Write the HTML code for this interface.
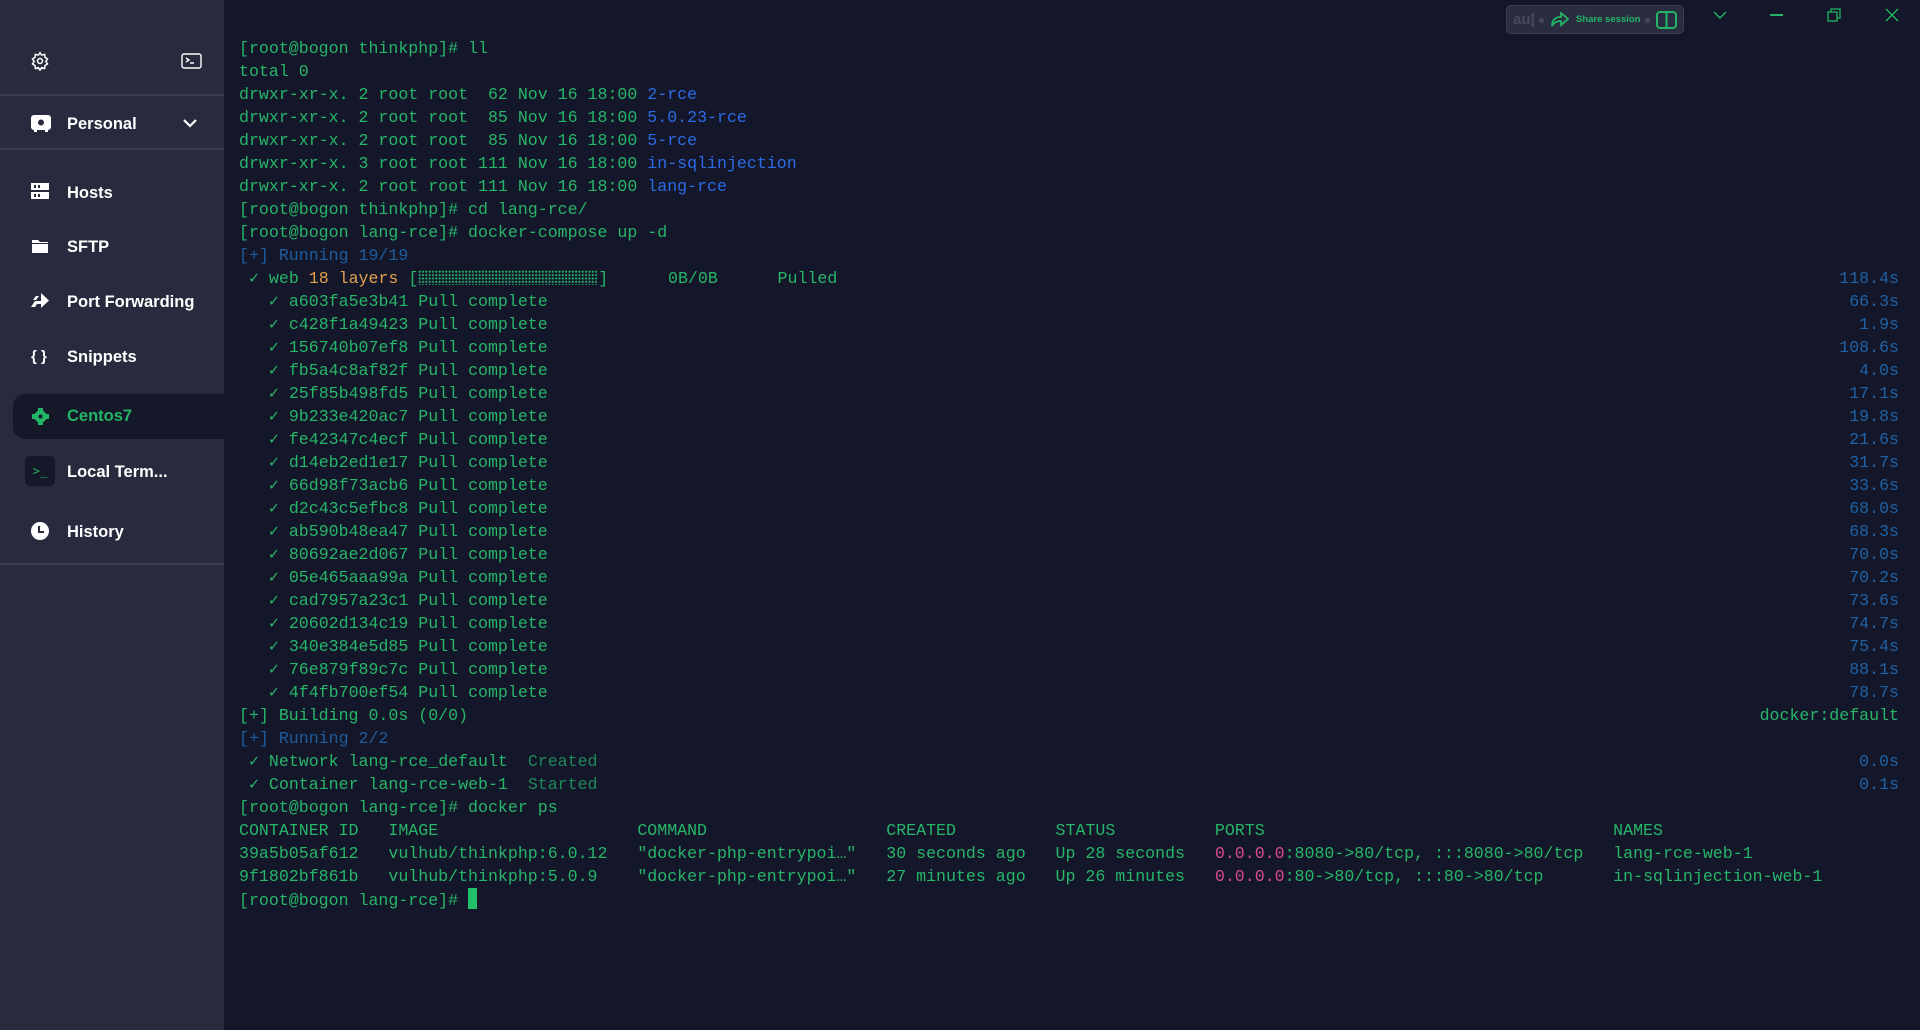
<!DOCTYPE html>
<html><head><meta charset="utf-8"><style>
*{margin:0;padding:0;box-sizing:border-box}
body{width:1920px;height:1030px;background:#141729;overflow:hidden;position:relative;font-family:"Liberation Sans",sans-serif}
#sb{position:absolute;left:0;top:0;width:224px;height:1030px;background:#282b3d}
.div{position:absolute;left:0;width:224px;height:2px;background:#3a3d50}
.it{position:absolute;left:67px;color:#fff;font-weight:bold;font-size:16.5px;line-height:20px}
.ic{position:absolute}
#t{position:absolute;left:239px;top:37px;width:1660px;font-family:"Liberation Mono","DejaVu Sans Mono",monospace;font-size:16.6px;line-height:23px;color:#27b56a;white-space:pre}
.l{height:23px;display:flex;justify-content:space-between}
.b{color:#2b6be6}.d{color:#1f5c9c}.tm{color:#1f62a6}.o{color:#e2a050}.p{color:#d74c8a}.g{color:#1e8a5c}
#cur{display:inline-block;width:9px;height:21px;background:#22c06a;vertical-align:-4px}
.bar{display:inline-block;width:180px;height:15px;vertical-align:-2px;background-image:radial-gradient(circle,#27b56a 0.9px,transparent 1.2px);background-size:3.33px 3.4px}
</style></head><body>
<div id="sb">
<svg class="ic" style="left:30px;top:51px" width="20" height="20" viewBox="0 0 24 24" fill="none" stroke="#fff" stroke-width="1.8"><circle cx="12" cy="12" r="3"/><path d="M12 2l2 3 3.5-1 .5 3.5 3 2-2 3 2 3-3 2-.5 3.5-3.5-1-2 3-2-3-3.5 1-.5-3.5-3-2 2-3-2-3 3-2 .5-3.5 3.5 1z"/></svg>
<svg class="ic" style="left:181px;top:53px" width="21" height="16" viewBox="0 0 21 16" fill="none" stroke="#fff" stroke-width="1.4"><rect x="1" y="1" width="19" height="14" rx="2"/><path d="M5 5l3 2-3 2M9 10h4"/></svg>
<div class="div" style="top:94px"></div>
<svg class="ic" style="left:31px;top:114px" width="20" height="18" viewBox="0 0 20 18"><rect x="0" y="1" width="20" height="15" rx="3" fill="#fff"/><rect x="3" y="15" width="3" height="3" fill="#fff"/><rect x="14" y="15" width="3" height="3" fill="#fff"/><circle cx="10" cy="8.5" r="3" fill="#282b3d"/></svg>
<div class="it" style="top:114px">Personal</div>
<svg class="ic" style="left:182px;top:117px" width="16" height="12" viewBox="0 0 16 12" fill="none" stroke="#fff" stroke-width="2.2"><path d="M2 3l6 6 6-6"/></svg>
<div class="div" style="top:148px"></div>
<svg class="ic" style="left:31px;top:183px" width="18" height="17" viewBox="0 0 18 17"><rect y="0" width="18" height="7" fill="#fff"/><rect y="9" width="18" height="7" fill="#fff"/><rect x="3" y="2" width="2" height="3" fill="#282b3d"/><rect x="7" y="2" width="2" height="3" fill="#282b3d"/><rect x="3" y="11" width="2" height="3" fill="#282b3d"/><rect x="7" y="11" width="2" height="3" fill="#282b3d"/></svg>
<div class="it" style="top:183px">Hosts</div>
<svg class="ic" style="left:32px;top:240px" width="16" height="13" viewBox="0 0 16 13"><path d="M0 0h6l2 2h8v11H0z" fill="#fff"/><rect x="0" y="3" width="16" height="1" fill="#282b3d"/></svg>
<div class="it" style="top:237px">SFTP</div>
<svg class="ic" style="left:31px;top:293px" width="18" height="15" viewBox="0 0 18 15"><path d="M10 0l8 7.5-8 7.5v-4H6l-2 3H0l4-6h6z" fill="#fff"/><path d="M2 7l3-4h3l-3 4z" fill="#fff"/></svg>
<div class="it" style="top:292px">Port Forwarding</div>
<div class="it" style="left:31px;top:347px;font-size:15px">{ }</div>
<div class="it" style="top:347px">Snippets</div>
</div>
<div style="position:absolute;left:13px;top:394px;width:211px;height:45px;background:#151828;border-radius:12px 0 0 12px"></div>
<svg class="ic" style="left:32px;top:408px" width="17" height="17" viewBox="0 0 17 17" fill="#22b565"><rect x="6" y="0" width="5" height="17"/><rect x="0" y="6" width="17" height="5"/><rect x="2.5" y="2.5" width="12" height="12" transform="rotate(45 8.5 8.5)"/><circle cx="8.5" cy="8.5" r="2" fill="#151828"/></svg>
<div class="it" style="top:406px;color:#22b565">Centos7</div>
<div style="position:absolute;left:25px;top:456px;width:30px;height:30px;background:#151828;border-radius:5px;color:#22b565;font-family:'DejaVu Sans Mono',monospace;font-size:12px;line-height:30px;text-align:center">&gt;_</div>
<div class="it" style="top:462px">Local Term...</div>
<svg class="ic" style="left:31px;top:522px" width="18" height="18" viewBox="0 0 18 18"><circle cx="9" cy="9" r="9" fill="#fff"/><path d="M8 4v6h5" stroke="#282b3d" stroke-width="2" fill="none"/></svg>
<div class="it" style="top:522px">History</div>
<div class="div" style="top:563px;background:#3a3d50"></div>

<div style="position:absolute;left:1506px;top:5px;width:178px;height:29px;border:1px solid #3c3f52;background:#2a2d40;border-radius:5px"></div>
<div style="position:absolute;left:1513px;top:11px;color:#474a5c;font-size:15px;font-weight:bold">au|</div>
<div style="position:absolute;left:1539px;top:18px;width:5px;height:5px;border-radius:50%;background:#474a5c"></div>
<svg class="ic" style="left:1551px;top:12px" width="18" height="15" viewBox="0 0 18 15" fill="none" stroke="#22b565" stroke-width="1.8"><path d="M10 1l7 6-7 6V9C6 9 3 10 1 14 1 8 4 5 10 5z"/></svg>
<div style="position:absolute;left:1576px;top:14px;color:#22b565;font-size:9.5px;font-weight:bold">Share session</div>
<div style="position:absolute;left:1645px;top:18px;width:5px;height:5px;border-radius:50%;background:#474a5c"></div>
<svg class="ic" style="left:1656px;top:11px" width="21" height="18" viewBox="0 0 21 18" fill="none" stroke="#22b565" stroke-width="2"><rect x="1" y="1" width="19" height="16" rx="3"/><path d="M10.5 1v16"/></svg>
<svg class="ic" style="left:1712px;top:9px" width="16" height="12" viewBox="0 0 16 12" fill="none" stroke="#22b565" stroke-width="1.4"><path d="M2 3l6 6 6-6"/></svg>
<div style="position:absolute;left:1770px;top:14px;width:13px;height:1.5px;background:#22b565"></div>
<svg class="ic" style="left:1827px;top:8px" width="14" height="14" viewBox="0 0 14 14" fill="none" stroke="#22b565" stroke-width="1.3"><rect x="1" y="4" width="9" height="9"/><path d="M4 4V1h9v9h-3"/></svg>
<svg class="ic" style="left:1885px;top:8px" width="14" height="14" viewBox="0 0 14 14" fill="none" stroke="#22b565" stroke-width="1.4"><path d="M1 1l12 12M13 1L1 13"/></svg>

<div id="t"><div class="l"><span>[root@bogon thinkphp]# ll</span></div><div class="l"><span>total 0</span></div><div class="l"><span>drwxr-xr-x. 2 root root  62 Nov 16 18:00 <span class="b">2-rce</span></span></div><div class="l"><span>drwxr-xr-x. 2 root root  85 Nov 16 18:00 <span class="b">5.0.23-rce</span></span></div><div class="l"><span>drwxr-xr-x. 2 root root  85 Nov 16 18:00 <span class="b">5-rce</span></span></div><div class="l"><span>drwxr-xr-x. 3 root root 111 Nov 16 18:00 <span class="b">in-sqlinjection</span></span></div><div class="l"><span>drwxr-xr-x. 2 root root 111 Nov 16 18:00 <span class="b">lang-rce</span></span></div><div class="l"><span>[root@bogon thinkphp]# cd lang-rce/</span></div><div class="l"><span>[root@bogon lang-rce]# docker-compose up -d</span></div><div class="l"><span class="d">[+] Running 19/19</span></div><div class="l"><span> ✓ web <span class="o">18 layers</span> [<span class="bar"></span>]      0B/0B      Pulled</span><span class="tm">118.4s</span></div><div class="l"><span>   ✓ a603fa5e3b41 Pull complete</span><span class="tm">66.3s</span></div><div class="l"><span>   ✓ c428f1a49423 Pull complete</span><span class="tm">1.9s</span></div><div class="l"><span>   ✓ 156740b07ef8 Pull complete</span><span class="tm">108.6s</span></div><div class="l"><span>   ✓ fb5a4c8af82f Pull complete</span><span class="tm">4.0s</span></div><div class="l"><span>   ✓ 25f85b498fd5 Pull complete</span><span class="tm">17.1s</span></div><div class="l"><span>   ✓ 9b233e420ac7 Pull complete</span><span class="tm">19.8s</span></div><div class="l"><span>   ✓ fe42347c4ecf Pull complete</span><span class="tm">21.6s</span></div><div class="l"><span>   ✓ d14eb2ed1e17 Pull complete</span><span class="tm">31.7s</span></div><div class="l"><span>   ✓ 66d98f73acb6 Pull complete</span><span class="tm">33.6s</span></div><div class="l"><span>   ✓ d2c43c5efbc8 Pull complete</span><span class="tm">68.0s</span></div><div class="l"><span>   ✓ ab590b48ea47 Pull complete</span><span class="tm">68.3s</span></div><div class="l"><span>   ✓ 80692ae2d067 Pull complete</span><span class="tm">70.0s</span></div><div class="l"><span>   ✓ 05e465aaa99a Pull complete</span><span class="tm">70.2s</span></div><div class="l"><span>   ✓ cad7957a23c1 Pull complete</span><span class="tm">73.6s</span></div><div class="l"><span>   ✓ 20602d134c19 Pull complete</span><span class="tm">74.7s</span></div><div class="l"><span>   ✓ 340e384e5d85 Pull complete</span><span class="tm">75.4s</span></div><div class="l"><span>   ✓ 76e879f89c7c Pull complete</span><span class="tm">88.1s</span></div><div class="l"><span>   ✓ 4f4fb700ef54 Pull complete</span><span class="tm">78.7s</span></div><div class="l"><span>[+] Building 0.0s (0/0)</span><span>docker:default</span></div><div class="l"><span class="d">[+] Running 2/2</span></div><div class="l"><span> ✓ Network lang-rce_default  <span class="g">Created</span></span><span class="tm">0.0s</span></div><div class="l"><span> ✓ Container lang-rce-web-1  <span class="g">Started</span></span><span class="tm">0.1s</span></div><div class="l"><span>[root@bogon lang-rce]# docker ps</span></div><div class="l"><span>CONTAINER ID   IMAGE                    COMMAND                  CREATED          STATUS          PORTS                                   NAMES</span></div><div class="l"><span>39a5b05af612   vulhub/thinkphp:6.0.12   "docker-php-entrypoi…"   30 seconds ago   Up 28 seconds   <span class="p">0.0.0.0</span>:8080->80/tcp, :::8080->80/tcp   lang-rce-web-1</span></div><div class="l"><span>9f1802bf861b   vulhub/thinkphp:5.0.9    "docker-php-entrypoi…"   27 minutes ago   Up 26 minutes   <span class="p">0.0.0.0</span>:80->80/tcp, :::80->80/tcp       in-sqlinjection-web-1</span></div><div class="l"><span>[root@bogon lang-rce]# <span id="cur"></span></span></div></div>
</body></html>
